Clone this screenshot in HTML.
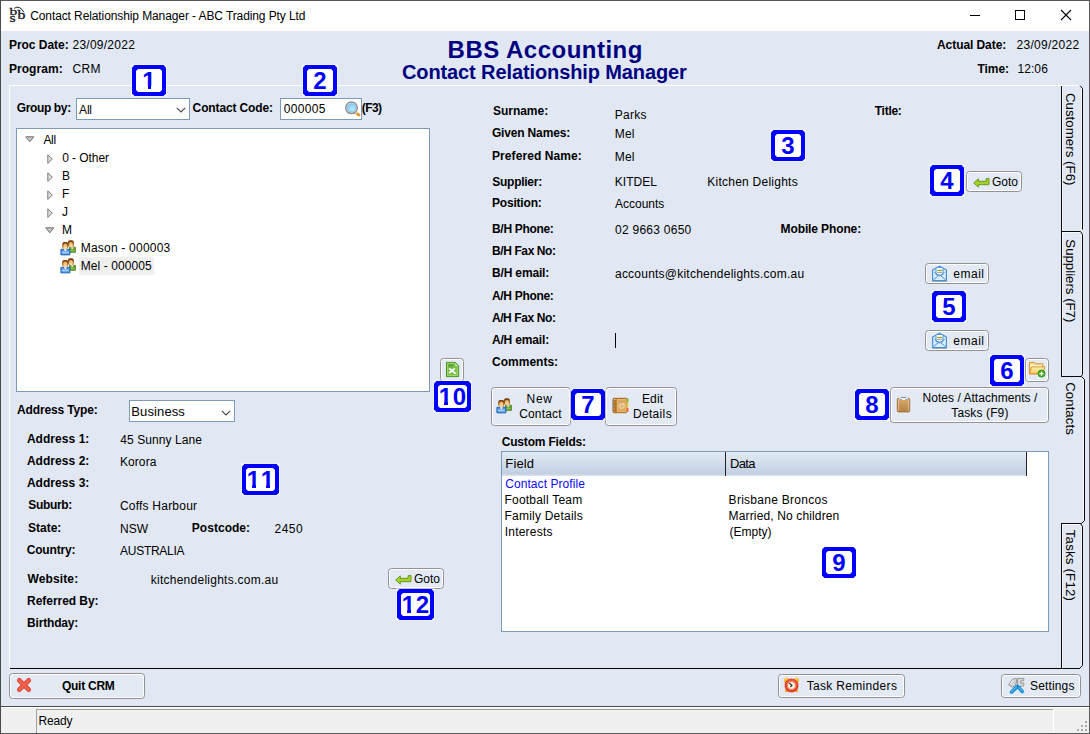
<!DOCTYPE html>
<html><head><meta charset="utf-8"><title>Contact Relationship Manager</title>
<style>
*{box-sizing:border-box;margin:0;padding:0}
html,body{width:1090px;height:734px;overflow:hidden}
body{position:relative;background:#e1e8f3;font-family:"Liberation Sans",sans-serif;font-size:12px;color:#000}
.a{position:absolute;white-space:nowrap;line-height:14px}
.b{font-weight:bold}
.btn{position:absolute;border:1px solid #939393;border-radius:3.5px;background:#e3eaf4;box-shadow:inset 0 0 0 1px rgba(255,255,255,.9)}
.ann{position:absolute;width:34px;height:31px;background:#fff;box-shadow:0 0 0 1px rgba(255,255,255,.4);color:#0000ff;font-weight:bold;font-size:24px;line-height:24px;letter-spacing:.65px;text-align:center}
.ann.w{width:37px}
.ann:before{content:"";position:absolute;left:0;top:0;right:0;bottom:0;background:#0000ff;clip-path:polygon(2.5px 0,calc(100% - 2.5px) 0,100% 2.5px,100% calc(100% - 2.5px),calc(100% - 2.5px) 100%,2.5px 100%,0 calc(100% - 2.5px),0 2.5px)}
.ann:after{content:"";position:absolute;left:4px;top:4px;right:4px;bottom:4px;background:#fff;clip-path:polygon(2px 0,calc(100% - 2px) 0,100% 2px,100% calc(100% - 2px),calc(100% - 2px) 100%,2px 100%,0 calc(100% - 2px),0 2px)}
.ann span{position:absolute;z-index:1;left:0;right:0;top:4px;padding-left:.65px}
.ann b{position:relative;display:inline-block;line-height:1;font-weight:bold}.ann b i{position:absolute;top:.728em;height:.15em;background:#fff}.ann b i.l{left:0;width:.231em}.ann b i.r{left:.374em;width:.2em}
.combo{position:absolute;border:1px solid #7c9aba;background:#fff}
</style></head><body>
<div class="a" style="left:0;top:0;width:1090px;height:31px;background:#fff"></div>
<div class="a" style="left:0;top:0;width:1090px;height:1px;background:#5a5a5a"></div>
<div class="a" style="left:0;top:0;width:1px;height:734px;background:#4a4a4a"></div>
<div class="a" style="left:1089px;top:0;width:1px;height:734px;background:#5a5a5a"></div>
<div class="a" style="left:30.19px;top:9px;line-height:14px;letter-spacing:-0.100px;color:#000">Contact Relationship Manager - ABC Trading Pty Ltd</div>
<svg class="a" style="left:6px;top:4px" width="22" height="20" viewBox="6 4 22 20" font-family="Liberation Serif,serif" fill="#1a1a1a" stroke="#1a1a1a" stroke-width=".3"><text transform="translate(9.600 14.700) scale(1.350 1)" font-size="11.400">b</text><text transform="translate(9.600 21.900) scale(1.350 1)" font-size="11.800">s</text><text transform="translate(17.400 19) scale(1.350 1)" font-size="11.800">b</text><path d="M14.300 8.300Q19.500 4.600 24 12.400" fill="none" stroke="#1a1a1a" stroke-width="1"/></svg>
<svg class="a" style="left:960px;top:0" width="130" height="31"><path d="M10 15.500h10" stroke="#000" fill="none"/><rect x="55.500" y="10.500" width="9" height="9" stroke="#000" fill="none"/><path d="M101 10l10 10M111 10l-10 10" stroke="#000" stroke-width="1.100" fill="none"/></svg>
<div class="a" style="left:1px;top:706px;width:1088px;height:28px;background:#f0f0f0;border-top:1px solid #4a4a4a"></div>
<div class="a" style="left:1px;top:733px;width:1088px;height:1px;background:#5a5a5a"></div>
<div class="a" style="left:1px;top:707px;width:1088px;height:1px;background:#fff"></div>
<div class="a b" style="left:8.90px;top:38px;line-height:14px;letter-spacing:-0.018px">Proc Date:</div>
<div class="a" style="left:72.50px;top:38px;line-height:14px;letter-spacing:0.250px">23/09/2022</div>
<div class="a b" style="left:8.90px;top:62px;line-height:14px;letter-spacing:0.073px">Program:</div>
<div class="a" style="left:72.49px;top:62px;line-height:14px;letter-spacing:0.333px">CRM</div>
<div class="a b" style="left:447.59px;top:35.5px;line-height:27px;font-size:24px;letter-spacing:0.491px;color:#000080">BBS Accounting</div>
<div class="a b" style="left:401.98px;top:61.2px;line-height:22px;font-size:20px;letter-spacing:-0.107px;color:#000080">Contact Relationship Manager</div>
<div class="a b" style="left:937.00px;top:38px;line-height:14px;letter-spacing:-0.069px">Actual Date:</div>
<div class="a" style="left:1016.50px;top:38px;line-height:14px;letter-spacing:0.283px">23/09/2022</div>
<div class="a b" style="left:977.47px;top:62px;line-height:14px;letter-spacing:-0.054px">Time:</div>
<div class="a" style="left:1017.39px;top:62px;line-height:14px;letter-spacing:0.103px">12:06</div>
<div class="a" style="left:9px;top:85px;width:1072px;height:1px;background:#fff"></div>
<div class="a" style="left:9px;top:85px;width:1px;height:584px;background:#fff"></div>
<div class="a" style="left:10px;top:668px;width:1070px;height:1px;background:#000"></div>
<div class="a b" style="left:16.71px;top:101px;line-height:14px;letter-spacing:-0.360px">Group by:</div>
<div class="combo" style="left:76px;top:98px;width:114px;height:22px"></div>
<div class="a" style="left:79.08px;top:103px;line-height:14px;letter-spacing:-0.205px">All</div>
<svg class="a" style="left:176px;top:107px" width="10" height="6"><path d="M.8.8l4.200 4.200l4.200-4.200" fill="none" stroke="#444" stroke-width="1.100"/></svg>
<div class="a b" style="left:192.61px;top:101px;line-height:14px;letter-spacing:-0.137px">Contact Code:</div>
<div class="combo" style="left:280px;top:98px;width:82px;height:22px"></div>
<div class="a" style="left:283.83px;top:102px;line-height:14px;letter-spacing:0.306px">000005</div>
<svg class="a" style="left:343px;top:99px" width="19" height="19" viewBox="343 99 19 19"><defs><radialGradient id="lens" cx=".6" cy=".65" r=".7"><stop offset="0" stop-color="#bdeefa"/><stop offset="1" stop-color="#7cc0f2"/></radialGradient></defs><path d="M355.200 112.400l3.800 2.600" stroke="#e0982c" stroke-width="2.800" stroke-linecap="round"/><path d="M355 112l1.800 1.300" stroke="#e8e4dc" stroke-width="2.400"/><circle cx="351.500" cy="107.800" r="5.800" fill="#fff" stroke="#8f8f8f" stroke-width="1.500"/><circle cx="351.500" cy="107.800" r="4.300" fill="url(#lens)" stroke="#6ab4ee" stroke-width=".6"/></svg>
<div class="a b" style="left:361.80px;top:101px;line-height:14px;letter-spacing:-0.600px">(F3)</div>
<div class="a" style="left:16px;top:128px;width:414px;height:264px;background:#fff;border:1px solid #7c9aba"></div>
<svg class="a" style="left:25.3px;top:136.4px" width="10" height="7"><path d="M.8.8h8L4.800 5.800z" fill="#c4c4c4" stroke="#707070" stroke-width="1"/></svg>
<svg class="a" style="left:46.5px;top:153.5px" width="7" height="11"><path d="M.8.800v8.600L5.300 5.100z" fill="#dedede" stroke="#7c7c7c" stroke-width="1"/></svg>
<svg class="a" style="left:46.5px;top:171.5px" width="7" height="11"><path d="M.8.800v8.600L5.300 5.100z" fill="#dedede" stroke="#7c7c7c" stroke-width="1"/></svg>
<svg class="a" style="left:46.5px;top:189.5px" width="7" height="11"><path d="M.8.800v8.600L5.300 5.100z" fill="#dedede" stroke="#7c7c7c" stroke-width="1"/></svg>
<svg class="a" style="left:46.5px;top:207.5px" width="7" height="11"><path d="M.8.800v8.600L5.300 5.100z" fill="#dedede" stroke="#7c7c7c" stroke-width="1"/></svg>
<svg class="a" style="left:44.5px;top:227px" width="10" height="7"><path d="M.8.8h8L4.800 5.800z" fill="#c4c4c4" stroke="#707070" stroke-width="1"/></svg>
<div class="a" style="left:43.38px;top:133px;line-height:14px;letter-spacing:-0.305px">All</div>
<div class="a" style="left:62.13px;top:151px;line-height:14px;letter-spacing:-0.060px">0 - Other</div>
<div class="a" style="left:61.92px;top:169px;line-height:14px;letter-spacing:0.200px">B</div>
<div class="a" style="left:61.92px;top:187px;line-height:14px;letter-spacing:0.200px">F</div>
<div class="a" style="left:62.11px;top:205px;line-height:14px;letter-spacing:0.200px">J</div>
<div class="a" style="left:61.92px;top:223px;line-height:14px;letter-spacing:0.200px">M</div>
<div class="a" style="left:80.72px;top:241px;line-height:14px;letter-spacing:0.214px">Mason - 000003</div>
<div class="a" style="left:79px;top:257px;width:75px;height:18px;background:#f0f0f0"></div>
<div class="a" style="left:80.72px;top:259px;line-height:14px;letter-spacing:0.086px">Mel - 000005</div>
<svg class="a" style="left:59.5px;top:239.5px" width="17" height="16" viewBox="0 0 17 16"><defs><linearGradient id="sk1" x1="0" y1="0" x2="0" y2="1"><stop offset="0" stop-color="#6a3206"/><stop offset=".55" stop-color="#a55c18"/><stop offset="1" stop-color="#c98a3c"/></linearGradient><linearGradient id="fc1" x1="0" y1="0" x2="0" y2="1"><stop offset="0" stop-color="#e2a858"/><stop offset="1" stop-color="#fdeab8"/></linearGradient></defs>
<path d="M9.500 7.300h5.900v5h-5.900z" fill="#6da52e" stroke="#4d7c1d" stroke-width=".9"/><path d="M10.700 7.200l1.500 2.100 1.500-2.100z" fill="#fff"/><path d="M10.100 10.800h4.800" stroke="#9ccc5c" stroke-width=".9"/>
<rect x="7.900" y=".3" width="6" height="7" rx="2.200" fill="url(#sk1)"/><rect x="9.100" y="1.900" width="3.700" height="5.200" rx="1.700" fill="url(#fc1)"/>
<path d="M.9 9.300h9v5.600h-9z" fill="#4f96e2" stroke="#1f5fb8" stroke-width=".9"/><path d="M1.900 11.600h7v1.700h-7z" fill="#a9d2f7"/><path d="M3.700 9.300l1.700 2.300 1.700-2.300z" fill="#fff"/>
<rect x="2.200" y="1.900" width="6.100" height="7.100" rx="2.200" fill="url(#sk1)"/><rect x="3.400" y="3.600" width="3.800" height="5.300" rx="1.700" fill="url(#fc1)"/></svg>
<svg class="a" style="left:59.5px;top:257.5px" width="17" height="16" viewBox="0 0 17 16"><defs><linearGradient id="sk2" x1="0" y1="0" x2="0" y2="1"><stop offset="0" stop-color="#6a3206"/><stop offset=".55" stop-color="#a55c18"/><stop offset="1" stop-color="#c98a3c"/></linearGradient><linearGradient id="fc2" x1="0" y1="0" x2="0" y2="1"><stop offset="0" stop-color="#e2a858"/><stop offset="1" stop-color="#fdeab8"/></linearGradient></defs>
<path d="M9.500 7.300h5.900v5h-5.900z" fill="#6da52e" stroke="#4d7c1d" stroke-width=".9"/><path d="M10.700 7.200l1.500 2.100 1.500-2.100z" fill="#fff"/><path d="M10.100 10.800h4.800" stroke="#9ccc5c" stroke-width=".9"/>
<rect x="7.900" y=".3" width="6" height="7" rx="2.200" fill="url(#sk2)"/><rect x="9.100" y="1.900" width="3.700" height="5.200" rx="1.700" fill="url(#fc2)"/>
<path d="M.9 9.300h9v5.600h-9z" fill="#4f96e2" stroke="#1f5fb8" stroke-width=".9"/><path d="M1.900 11.600h7v1.700h-7z" fill="#a9d2f7"/><path d="M3.700 9.300l1.700 2.300 1.700-2.300z" fill="#fff"/>
<rect x="2.200" y="1.900" width="6.100" height="7.100" rx="2.200" fill="url(#sk2)"/><rect x="3.400" y="3.600" width="3.800" height="5.300" rx="1.700" fill="url(#fc2)"/></svg>
<div class="btn" style="left:440px;top:358px;width:24px;height:24px"></div>
<svg class="a" style="left:445px;top:361px" width="15" height="17" viewBox="445 361 15 17"><path d="M446.500 362.400H455.300L458.600 365.700V376.600H446.500Z" fill="#7cc24a" stroke="#46961c" stroke-width="1"/><path d="M447.500 363.400H455L457.600 366V375.600H447.500Z" fill="none" stroke="#a6dc7c" stroke-width=".8"/><rect x="448.200" y="364" width="5" height="3.400" fill="#64a634"/><path d="M455 362.800V366.200H458.300Z" fill="#fff" stroke="#46961c" stroke-width=".5"/><path d="M449.200 368.400l5.600 4.600M454.800 368.400l-5.600 4.600" stroke="#fff" stroke-width="1.700"/><path d="M453.800 372.400l2.200 1.300" stroke="#fff" stroke-width="1.500"/></svg>
<div class="a b" style="left:17.00px;top:403px;line-height:14px;letter-spacing:-0.150px">Address Type:</div>
<div class="combo" style="left:129px;top:400px;width:106px;height:22px"></div>
<div class="a" style="left:131.33px;top:404px;line-height:15px;font-size:13px;letter-spacing:0.112px">Business</div>
<svg class="a" style="left:221px;top:409.500px" width="10" height="6"><path d="M.8.800l4.200 4.200l4.200-4.200" fill="none" stroke="#444" stroke-width="1.100"/></svg>
<div class="a b" style="left:26.90px;top:432px;line-height:14px;letter-spacing:0.048px">Address 1:</div>
<div class="a" style="left:120.22px;top:433px;line-height:14px;letter-spacing:0.089px">45 Sunny Lane</div>
<div class="a b" style="left:26.90px;top:454px;line-height:14px;letter-spacing:0.048px">Address 2:</div>
<div class="a" style="left:119.92px;top:455px;line-height:14px;letter-spacing:0.093px">Korora</div>
<div class="a b" style="left:26.90px;top:476px;line-height:14px;letter-spacing:0.048px">Address 3:</div>
<div class="a b" style="left:28.35px;top:498px;line-height:14px;letter-spacing:-0.365px">Suburb:</div>
<div class="a" style="left:119.89px;top:499px;line-height:14px;letter-spacing:0.226px">Coffs Harbour</div>
<div class="a b" style="left:27.95px;top:521px;line-height:14px;letter-spacing:0.012px">State:</div>
<div class="a" style="left:119.92px;top:522px;line-height:14px;letter-spacing:0.065px">NSW</div>
<div class="a b" style="left:191.80px;top:521px;line-height:14px;letter-spacing:0.031px">Postcode:</div>
<div class="a" style="left:274.50px;top:522px;line-height:14px;letter-spacing:0.492px">2450</div>
<div class="a b" style="left:26.71px;top:543px;line-height:14px;letter-spacing:-0.178px">Country:</div>
<div class="a" style="left:120.08px;top:544px;line-height:14px;letter-spacing:-0.292px">AUSTRALIA</div>
<div class="a b" style="left:27.59px;top:572px;line-height:14px;letter-spacing:0.109px">Website:</div>
<div class="a" style="left:150.79px;top:573px;line-height:14px;letter-spacing:0.249px">kitchendelights.com.au</div>
<div class="a b" style="left:27.10px;top:594px;line-height:14px;letter-spacing:-0.051px">Referred By:</div>
<div class="a b" style="left:27.10px;top:616px;line-height:14px;letter-spacing:-0.177px">Birthday:</div>
<div class="a b" style="left:492.95px;top:104px;line-height:14px;letter-spacing:-0.021px">Surname:</div>
<div class="a" style="left:614.82px;top:108px;line-height:14px;letter-spacing:0.261px">Parks</div>
<div class="a b" style="left:874.77px;top:104px;line-height:14px;letter-spacing:-0.275px">Title:</div>
<div class="a b" style="left:491.91px;top:126px;line-height:14px;letter-spacing:-0.162px">Given Names:</div>
<div class="a" style="left:614.82px;top:127px;line-height:14px;letter-spacing:0.126px">Mel</div>
<div class="a b" style="left:492.00px;top:149px;line-height:14px;letter-spacing:0.089px">Prefered Name:</div>
<div class="a" style="left:614.82px;top:150px;line-height:14px;letter-spacing:0.126px">Mel</div>
<div class="a b" style="left:492.25px;top:175px;line-height:14px;letter-spacing:-0.263px">Supplier:</div>
<div class="a" style="left:614.82px;top:175px;line-height:14px;letter-spacing:0.034px">KITDEL</div>
<div class="a" style="left:707.32px;top:175px;line-height:14px;letter-spacing:0.240px">Kitchen Delights</div>
<div class="a b" style="left:492.00px;top:196px;line-height:14px;letter-spacing:-0.196px">Position:</div>
<div class="a" style="left:614.98px;top:197px;line-height:14px">Accounts</div>
<div class="a b" style="left:492.00px;top:222px;line-height:14px;letter-spacing:-0.312px">B/H Phone:</div>
<div class="a" style="left:615.03px;top:223px;line-height:14px;letter-spacing:0.257px">02 9663 0650</div>
<div class="a b" style="left:780.60px;top:222px;line-height:14px;letter-spacing:-0.120px">Mobile Phone:</div>
<div class="a b" style="left:492.00px;top:244px;line-height:14px;letter-spacing:-0.395px">B/H Fax No:</div>
<div class="a b" style="left:492.00px;top:266px;line-height:14px;letter-spacing:-0.158px">B/H email:</div>
<div class="a" style="left:614.99px;top:267px;line-height:14px;letter-spacing:0.228px">accounts@kitchendelights.com.au</div>
<div class="a b" style="left:491.90px;top:289px;line-height:14px;letter-spacing:-0.301px">A/H Phone:</div>
<div class="a b" style="left:491.90px;top:311px;line-height:14px;letter-spacing:-0.385px">A/H Fax No:</div>
<div class="a b" style="left:491.90px;top:333px;line-height:14px;letter-spacing:-0.148px">A/H email:</div>
<div class="a" style="left:615px;top:333px;width:1px;height:15px;background:#000"></div>
<div class="a b" style="left:492.11px;top:355px;line-height:14px;letter-spacing:-0.007px">Comments:</div>
<div class="a b" style="left:501.71px;top:435px;line-height:14px;letter-spacing:-0.179px">Custom Fields:</div>
<div class="a" style="left:501px;top:451px;width:548px;height:181px;background:#fff;border:1px solid #7c9aba"></div>
<div class="a" style="left:502px;top:452px;width:525px;height:24px;background:linear-gradient(#e2eaf5 0%,#d3deec 45%,#c2d0e3 90%,#dbe4f0 100%);border-right:1px solid #222"></div>
<div class="a" style="left:725px;top:452px;width:1px;height:24px;background:#222"></div>
<div class="a" style="left:505.33px;top:456px;line-height:15px;font-size:13px;letter-spacing:0.132px">Field</div>
<div class="a" style="left:729.93px;top:456px;line-height:15px;font-size:13px;letter-spacing:-0.665px">Data</div>
<div class="a" style="left:505.19px;top:477px;line-height:14px;letter-spacing:0.074px;color:#0a0aff">Contact Profile</div>
<div class="a" style="left:504.52px;top:493px;line-height:14px;letter-spacing:0.206px">Football Team</div>
<div class="a" style="left:728.62px;top:493px;line-height:14px;letter-spacing:0.273px">Brisbane Broncos</div>
<div class="a" style="left:504.52px;top:509px;line-height:14px;letter-spacing:0.221px">Family Details</div>
<div class="a" style="left:728.62px;top:509px;line-height:14px;letter-spacing:0.138px">Married, No children</div>
<div class="a" style="left:504.79px;top:525px;line-height:14px;letter-spacing:0.203px">Interests</div>
<div class="a" style="left:729.46px;top:525px;line-height:14px;letter-spacing:0.015px">(Empty)</div>
<div class="btn" style="left:966px;top:171px;width:56px;height:21px"></div><svg class="a" style="left:972.5px;top:177.5px" width="17" height="10" viewBox="0 0 17 10"><path d="M.7 5L5.300.800v2.500h7.800V.6h2.900v6.100H5.300v2.500z" fill="#a6d22c" stroke="#5f9310" stroke-width=".9" stroke-linejoin="round"/></svg>
<div class="a" style="left:992.10px;top:175px;line-height:14px;letter-spacing:-0.069px">Goto</div>
<div class="btn" style="left:388px;top:568px;width:56px;height:21px"></div><svg class="a" style="left:394.5px;top:574.5px" width="17" height="10" viewBox="0 0 17 10"><path d="M.7 5L5.300.800v2.500h7.800V.6h2.900v6.100H5.300v2.500z" fill="#a6d22c" stroke="#5f9310" stroke-width=".9" stroke-linejoin="round"/></svg>
<div class="a" style="left:414.10px;top:572px;line-height:14px;letter-spacing:-0.069px">Goto</div>
<div class="btn" style="left:925px;top:263px;width:64px;height:21px"></div>
<svg class="a" style="left:931px;top:265px" width="17" height="17" viewBox="931 265 17 17"><g transform="translate(0 0)"><path d="M932.600 270L939.500 266.300L946.400 270V280.600H932.600Z" fill="#d8eefc" stroke="#4b8fd0" stroke-width="1.200" stroke-linejoin="round"/><path d="M932.200 281.500H946.800" stroke="#8a8a8a" stroke-width=".8" opacity=".7"/><rect x="936" y="267.400" width="7" height="7.600" rx="1.200" fill="#fff" stroke="#4b8fd0" stroke-width="1"/><path d="M937.300 270.500h4.600" stroke="#8aa60c" stroke-width="1.300"/><path d="M937.300 272.600h4.600" stroke="#9a9a9a" stroke-width="1"/><path d="M933.400 279.800L938.300 275.600M945.600 279.800L940.700 275.600M934.400 272.300L939.500 276L944.600 272.300" fill="none" stroke="#4b8fd0" stroke-width="1"/></g></svg>
<div class="a" style="left:953.19px;top:267px;line-height:14px;letter-spacing:0.534px">email</div>
<div class="btn" style="left:925px;top:330px;width:64px;height:21px"></div>
<svg class="a" style="left:931px;top:332px" width="17" height="17" viewBox="931 332 17 17"><g transform="translate(0 67)"><path d="M932.600 270L939.500 266.300L946.400 270V280.600H932.600Z" fill="#d8eefc" stroke="#4b8fd0" stroke-width="1.200" stroke-linejoin="round"/><path d="M932.200 281.500H946.800" stroke="#8a8a8a" stroke-width=".8" opacity=".7"/><rect x="936" y="267.400" width="7" height="7.600" rx="1.200" fill="#fff" stroke="#4b8fd0" stroke-width="1"/><path d="M937.300 270.500h4.600" stroke="#8aa60c" stroke-width="1.300"/><path d="M937.300 272.600h4.600" stroke="#9a9a9a" stroke-width="1"/><path d="M933.400 279.800L938.300 275.600M945.600 279.800L940.700 275.600M934.400 272.300L939.500 276L944.600 272.300" fill="none" stroke="#4b8fd0" stroke-width="1"/></g></svg>
<div class="a" style="left:953.19px;top:334px;line-height:14px;letter-spacing:0.534px">email</div>
<div class="btn" style="left:1025px;top:358px;width:24px;height:24px"></div>
<svg class="a" style="left:1028px;top:361px" width="19" height="18" viewBox="1028 361 19 18"><defs><linearGradient id="fo" x1="0" y1="0" x2="0" y2="1"><stop offset="0" stop-color="#fef2bc"/><stop offset="1" stop-color="#f5c85a"/></linearGradient></defs><path d="M1029.400 362.500h5.300l.9 1.300h7.300v10h-13.500z" fill="#fbe08a" stroke="#d9952e" stroke-width="1" stroke-linejoin="round"/><path d="M1030.400 365h11.600v2h-11.600z" fill="#fff7d6"/><path d="M1031.600 366.900H1044.800L1042.900 373.800H1029.500Z" fill="url(#fo)" stroke="#d9952e" stroke-width="1" stroke-linejoin="round"/><circle cx="1041.500" cy="373.600" r="3.500" fill="#3fae1c" stroke="#2c8a10" stroke-width=".8"/><path d="M1041.500 371.500v4.200M1039.400 373.600h4.200" stroke="#fff" stroke-width="1.300"/></svg>
<div class="btn" style="left:491px;top:387px;width:80px;height:39px"></div><svg class="a" style="left:495.5px;top:398px" width="17" height="16" viewBox="0 0 17 16"><defs><linearGradient id="sk3" x1="0" y1="0" x2="0" y2="1"><stop offset="0" stop-color="#6a3206"/><stop offset=".55" stop-color="#a55c18"/><stop offset="1" stop-color="#c98a3c"/></linearGradient><linearGradient id="fc3" x1="0" y1="0" x2="0" y2="1"><stop offset="0" stop-color="#e2a858"/><stop offset="1" stop-color="#fdeab8"/></linearGradient></defs>
<path d="M9.500 7.300h5.900v5h-5.900z" fill="#6da52e" stroke="#4d7c1d" stroke-width=".9"/><path d="M10.700 7.200l1.500 2.100 1.500-2.100z" fill="#fff"/><path d="M10.100 10.800h4.800" stroke="#9ccc5c" stroke-width=".9"/>
<rect x="7.900" y=".3" width="6" height="7" rx="2.200" fill="url(#sk3)"/><rect x="9.100" y="1.900" width="3.700" height="5.200" rx="1.700" fill="url(#fc3)"/>
<path d="M.9 9.300h9v5.600h-9z" fill="#4f96e2" stroke="#1f5fb8" stroke-width=".9"/><path d="M1.900 11.600h7v1.700h-7z" fill="#a9d2f7"/><path d="M3.700 9.300l1.700 2.300 1.700-2.300z" fill="#fff"/>
<rect x="2.200" y="1.900" width="6.100" height="7.100" rx="2.200" fill="url(#sk3)"/><rect x="3.400" y="3.600" width="3.800" height="5.300" rx="1.700" fill="url(#fc3)"/></svg>
<div class="a" style="left:526.62px;top:391.5px;line-height:14px;letter-spacing:0.675px">New</div>
<div class="a" style="left:519.19px;top:406.5px;line-height:14px;letter-spacing:0.157px">Contact</div>
<div class="btn" style="left:605px;top:387px;width:72px;height:39px"></div>
<svg class="a" style="left:611px;top:397px" width="19" height="17" viewBox="611 397 19 17"><rect x="613" y="398.300" width="13.800" height="14.400" rx="1" fill="#cc8c3c" stroke="#a8661a" stroke-width="1"/><rect x="613.500" y="398.800" width="3.200" height="13.400" fill="#b4701e"/><rect x="617.200" y="399.400" width="9" height="12.400" fill="#dca860" stroke="#ecc890" stroke-width=".6"/><rect x="626.800" y="398.300" width="1.600" height="3.800" fill="#7cb518"/><rect x="626.800" y="403" width="1.600" height="3.700" fill="#f5c62c"/><rect x="626.800" y="407.900" width="1.600" height="3.900" fill="#ee5a18"/><g fill="none" stroke="#7488a6" stroke-width="1"><path d="M612.300 401.600h2.600M612.300 404.600h2.600M612.300 407.700h2.600M612.300 410.700h2.600"/></g><g fill="none" stroke="#e08a1a" stroke-width="1"><path d="M613.400 402.600h1.800M613.400 405.600h1.800M613.400 408.700h1.800M613.400 411.600h1.800"/></g><path d="M614 399.600h1.400" stroke="#f4e6cc" stroke-width="1"/><text x="621.700" y="408.400" font-size="7.500" text-anchor="middle" fill="#f6e4c0" font-family="Liberation Sans,sans-serif">@</text></svg>
<div class="a" style="left:641.92px;top:391.5px;line-height:14px;letter-spacing:0.165px">Edit</div>
<div class="a" style="left:632.92px;top:406.5px;line-height:14px;letter-spacing:0.340px">Details</div>
<div class="btn" style="left:890px;top:387px;width:159px;height:36px"></div>
<svg class="a" style="left:896px;top:396px" width="16" height="18" viewBox="896 396 16 18"><defs><linearGradient id="cb" x1="0" y1="0" x2="0" y2="1"><stop offset="0" stop-color="#dcaa68"/><stop offset="1" stop-color="#b4824a"/></linearGradient></defs><rect x="897.300" y="398.300" width="12.400" height="13.600" rx="1.200" fill="url(#cb)" stroke="#a8722e" stroke-width="1"/><path d="M898.500 399.500v11.500M908.500 399.500v11.500" stroke="#fff" stroke-width=".8" opacity=".45"/><rect x="899.400" y="397.800" width="8.400" height="2.200" fill="#eef2f6"/><path d="M899.500 399.500h2.300M905.400 399.500h2.300" stroke="#8a9ab0" stroke-width="1"/><path d="M901 397.400h5" stroke="#8a8a8a" stroke-width="1"/></svg>
<div class="a" style="left:922.52px;top:390.5px;line-height:14px;letter-spacing:0.033px">Notes / Attachments /</div>
<div class="a" style="left:951.33px;top:405.5px;line-height:14px;letter-spacing:0.120px">Tasks (F9)</div>
<div class="btn" style="left:9px;top:673px;width:136px;height:26px"></div><svg class="a" style="left:16px;top:676.8px" width="16" height="16" viewBox="0 0 16 16"><path d="M3.300 3.300l9.400 9.400M12.700 3.300l-9.400 9.400" stroke="#dc3a22" stroke-width="4.600" stroke-linecap="round"/><path d="M3.300 3.300l9.400 9.400M12.700 3.300l-9.400 9.400" stroke="#f0604a" stroke-width="3" stroke-linecap="round"/></svg>
<div class="a b" style="left:61.91px;top:679px;line-height:14px;letter-spacing:-0.252px">Quit CRM</div>
<div class="btn" style="left:778px;top:674px;width:127px;height:24px"></div>
<svg class="a" style="left:783px;top:677px" width="17" height="17" viewBox="783 677 17 17"><defs><radialGradient id="ck" cx=".5" cy=".4" r=".7"><stop offset="0" stop-color="#f8725a"/><stop offset="1" stop-color="#e02c14"/></radialGradient></defs><circle cx="786.600" cy="680.400" r="2.700" fill="#f8b830"/><circle cx="796.400" cy="680.400" r="2.700" fill="#f8b830"/><circle cx="786.200" cy="679.800" r="1.300" fill="#fdd860"/><circle cx="796" cy="679.800" r="1.300" fill="#fdd860"/><circle cx="786.200" cy="690.900" r="1.300" fill="#f8a81c"/><circle cx="796.800" cy="690.900" r="1.300" fill="#f8a81c"/><rect x="785" y="679" width="13" height="13" rx="5.800" fill="url(#ck)" stroke="#d42a12" stroke-width=".6"/><circle cx="791.500" cy="685.400" r="4.300" fill="none" stroke="#fa9078" stroke-width=".9"/><circle cx="791.500" cy="685.400" r="3.500" fill="#fcf8d4"/><path d="M789.300 683.300L792 685.400L790.300 687" fill="none" stroke="#1d2747" stroke-width="1.100"/></svg>
<div class="a" style="left:806.73px;top:679px;line-height:14px;letter-spacing:0.319px">Task Reminders</div>
<div class="btn" style="left:1001px;top:674px;width:80px;height:24px"></div>
<svg class="a" style="left:1007px;top:677px" width="19" height="18" viewBox="1007 677 19 18"><path d="M1008.600 684.800L1012.400 679.400L1015.400 678.300L1017 679.200L1015.600 685.600L1012.400 687.200Z" fill="#d2d2d2" stroke="#8c8c8c" stroke-width=".9" stroke-linejoin="round"/><path d="M1010 684.200l3.200-4.200" stroke="#f4f4f4" stroke-width="1"/><path d="M1017.600 678.400H1023.800V680.600L1020.600 681V683H1023.800V685.800L1019.600 686.600L1017.400 685.600Z" fill="#d6d6d6" stroke="#909090" stroke-width=".9" stroke-linejoin="round"/><path d="M1017.400 686.400L1011.600 692" stroke="#1a8fd6" stroke-width="3.800" stroke-linecap="round"/><path d="M1018.900 687.600L1022.300 691.500" stroke="#1a8fd6" stroke-width="3.600" stroke-linecap="round"/><path d="M1016.400 687L1011.400 691.800M1019.600 687.800L1022.300 690.900" stroke="#8cd0f6" stroke-width=".9" stroke-linecap="round"/></svg>
<div class="a" style="left:1030.06px;top:679px;line-height:14px;letter-spacing:0.146px">Settings</div>
<div class="ann" style="left:132px;top:65px"><span><b>1<i class="l"></i><i class="r"></i></b></span></div>
<div class="ann" style="left:303px;top:65px"><span>2</span></div>
<div class="ann" style="left:771px;top:130px"><span>3</span></div>
<div class="ann" style="left:930px;top:165px"><span>4</span></div>
<div class="ann" style="left:932px;top:291px"><span>5</span></div>
<div class="ann" style="left:990px;top:355px"><span>6</span></div>
<div class="ann" style="left:571px;top:389px"><span>7</span></div>
<div class="ann" style="left:855px;top:389px"><span>8</span></div>
<div class="ann" style="left:822px;top:547px"><span>9</span></div>
<div class="ann w" style="left:434px;top:381px"><span><b>1<i class="l"></i><i class="r"></i></b>0</span></div>
<div class="ann w" style="left:242px;top:464px"><span><b>1<i class="l"></i><i class="r"></i></b><b>1<i class="l"></i><i class="r"></i></b></span></div>
<div class="ann w" style="left:397px;top:589px"><span><b>1<i class="l"></i><i class="r"></i></b>2</span></div>
<svg class="a" style="left:1055px;top:80px" width="35" height="595" viewBox="1055 80 35 595">
<g stroke="#fff" stroke-width="1" fill="none" opacity=".75"><path d="M1062.500 87v289M1062.500 525v143M1062 232.500h18.500M1062 524.500h18.500M1081.500 89v139.500M1081.500 235v139M1083.500 380v140M1081.500 527v138"/></g>
<g stroke="#0a0a0a" stroke-width="1" fill="none">
<path d="M1061.500 86v291M1061.500 523v146"/>
<path d="M1080 85.500l2.500 3V229.500"/>
<path d="M1061.500 231.500H1080.500l2 3V374.500l-1.500 2"/>
<path d="M1061.500 376.500H1081.500l3 3V520.500l-3 3H1061.500"/>
<path d="M1080.500 523.500l2 3V665.500l-3 3H1061.500"/>
</g>
<g font-family="Liberation Sans,sans-serif" font-size="13.300" fill="#000" letter-spacing=".02"><text transform="translate(1066 92.900) rotate(90)">Customers (F6)</text><text transform="translate(1066 239.300) rotate(90)" letter-spacing="-.03">Suppliers (F7)</text><text transform="translate(1066 382.200) rotate(90)">Contacts</text><text transform="translate(1066 529.800) rotate(90)" letter-spacing=".17">Tasks (F12)</text></g></svg>
<div class="a" style="left:36px;top:709px;width:1px;height:24px;background:#a0a0a0"></div><div class="a" style="left:36px;top:709px;width:1017px;height:1px;background:#a0a0a0"></div><div class="a" style="left:1053px;top:709px;width:1px;height:24px;background:#fff"></div>
<div class="a" style="left:38.62px;top:714px;line-height:14px;letter-spacing:-0.195px">Ready</div>
<svg class="a" style="left:1077px;top:721px" width="12" height="12"><g fill="#a8a8a8"><rect x="8" y="0" width="2" height="2"/><rect x="4" y="4" width="2" height="2"/><rect x="8" y="4" width="2" height="2"/><rect x="0" y="8" width="2" height="2"/><rect x="4" y="8" width="2" height="2"/><rect x="8" y="8" width="2" height="2"/></g></svg>
</body></html>
